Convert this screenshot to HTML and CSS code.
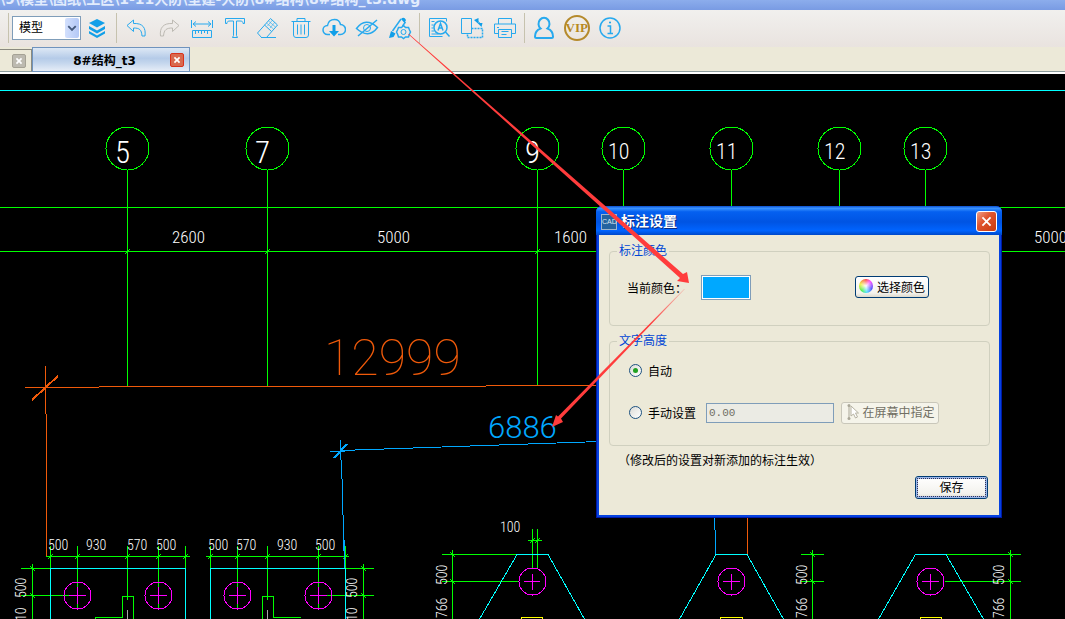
FILE: index.html
```html
<!DOCTYPE html>
<html lang="zh-CN">

<head>
    <meta charset="UTF-8">
    <meta name="viewport" content="width=device-width, initial-scale=1.0">
    <title>8#结构_t3</title>
    <link rel="stylesheet" href="styles.css">
</head>

<body>
    <header class="titlebar"><span>\9\模型\图纸\工区\1-11人防\型建-人防\8#结构\8#结构_t3.dwg</span></header>

    <nav class="toolbar">
        <span class="sep"></span>
        <div class="space">
            <select aria-label="空间">
                <option>模型</option>
                <option>布局</option>
            </select>
            <svg class="chevron" viewBox="0 0 15 21"><path d="M3.500 8.500l4 4 4-4" /></svg>
        </div>
        <button class="tool" aria-label="图层">
            <svg viewBox="0 0 24 24"><path class="solid" d="M12 3l8 4-8 4.500-8-4.500zM4 10l8 4.500 8-4.500v3l-8 4.500-8-4.500zM4 15l8 4.500 8-4.500v2.500l-8 4.500-8-4.500z" /></svg>
        </button>
        <span class="sep"></span>
        <button class="tool" aria-label="撤销">
            <svg viewBox="0 0 24 24"><path d="M9.500 4L3 9.500l6.500 6v-3.500c6 0 8 1.500 8.500 8h3c1-8-2-13-11.500-12.500z" /></svg>
        </button>
        <button class="tool off" aria-label="重做">
            <svg viewBox="0 0 24 24"><path d="M15.500 4l6.500 5.500-6.500 6v-3.500c-6 0-8.500 1.500-9 8h-3c-1-8 2.500-13 12-12.500z" /></svg>
        </button>
        <button class="tool" aria-label="测量">
            <svg viewBox="0 0 24 24"><path d="M1.500 4v8M22.500 4v8M3 8h18M6 5.500L3 8l3 2.500M18 5.500L21 8l-3 2.500M2.500 14.500h19v7h-19zM5.500 15v3M8.500 15v2M11.500 15v3M14.500 15v2M17.500 15v3" /></svg>
        </button>
        <button class="tool" aria-label="文字">
            <svg viewBox="0 0 24 24"><path d="M2.500 2.500h19v5h-1.500c0-2-1-2.500-3-2.500h-3.500v14.500l1 2h-5l1-2v-14.500h-3.500c-2 0-3 .500-3 2.500h-1.500z" /></svg>
        </button>
        <button class="tool" aria-label="橡皮">
            <svg viewBox="0 0 24 24"><path d="M14.500 2.500l7 6.500-11 12.500h-5l-4-4.500zM8.500 9l7 6.500M5 21.500h15" /><path class="hatch" d="M10.500 7l7 6M12.500 5l7 6M14 12l5-6M11.500 10l5-6" /></svg>
        </button>
        <button class="tool" aria-label="删除">
            <svg viewBox="0 0 24 24"><path d="M2.500 5.500h19M8 5V2.500h8V5M4.500 6v13q0 2.500 2.500 2.500h10q2.500 0 2.500-2.500V6M8.500 8.500v10M12 8.500v10M15.500 8.500v10" /></svg>
        </button>
        <button class="tool" aria-label="云下载">
            <svg viewBox="0 0 24 24"><path class="bold" d="M8 18.500H5.500a4.500 4.500 0 0 1 0-9q1-6 7-6 5 0 6 5a5 5 0 0 1 0 10H16" /><path class="solid" d="M10.500 9h3v6h3.500L12 20.500 7 15h3.500z" /></svg>
        </button>
        <button class="tool" aria-label="隐藏标注">
            <svg viewBox="0 0 24 24"><path class="bold" d="M1.500 12.500q9-12 21-1-9 12-21 1zM3 20L22 4" /><circle cx="12" cy="12" r="3.500" /></svg>
        </button>
        <button class="tool" aria-label="标注设置">
            <svg viewBox="0 0 24 24"><path class="bold" d="M13 3L4.500 15M17.500 6l-3 4" /><path class="solid" d="M13 3q3-3 5 1l-1.500 3zM3 15l4.500 2.500-2 3.500-4.500 1z" /><path class="bold" d="M15.500 9.500l2 2h3l1 2.500 1 2-1 2-1 3h-3l-2 1.500-2-1.500h-3l-1-3-1-2 1-2 1-2.500h3z" /><circle cx="15.500" cy="16" r="2.500" /></svg>
        </button>
        <span class="sep"></span>
        <button class="tool" aria-label="查找">
            <svg viewBox="0 0 24 24"><path d="M15.500 20.500h-13v-18h17v3M4.500 5.500h3M4.500 9h2M4.500 12h2M4.500 15h3M4.500 18h7" /><circle class="bold" cx="13.500" cy="11.500" r="6.500" /><path class="bold" d="M18.500 16l4 4.500M11 14.500l2.500-7 2.500 7M12 12h3" /></svg>
        </button>
        <button class="tool" aria-label="旋转">
            <svg viewBox="0 0 24 24"><path d="M1.500 2.500h10v15h-10zM17 5q3 1 4 4" /><path class="solid" d="M14 4l4.500-2v6zM17.500 7h5l-1 4z" /><path class="dash" d="M11.500 12.500h11v9h-15v-4" /></svg>
        </button>
        <button class="tool" aria-label="打印">
            <svg viewBox="0 0 24 24"><path d="M5.500 8V2.500h13V8M5.500 17.500h-4v-9.500h21v9.500h-4M4 11.500h2M8.500 15.500h7M8.500 18.500h5" /><path d="M5.500 13.500h13v8h-13z" /></svg>
        </button>
        <span class="sep"></span>
        <button class="tool" aria-label="用户">
            <svg viewBox="0 0 24 24"><path class="heavy" d="M8.500 12.500a5.500 6 0 1 1 7 0c4 1.500 5.500 4 5.500 8q0 1.500-1.500 1.500h-15Q3 22 3 20.500c0-4 1.500-6.500 5.500-8z" /></svg>
        </button>
        <button class="tool vip" aria-label="会员"><span>VIP</span></button>
        <button class="tool" aria-label="信息">
            <svg viewBox="0 0 24 24"><circle class="bold" cx="12" cy="12" r="10" /><path class="bold" d="M9.500 10h3v7.500M9.500 17.500h5.500" /><circle class="solid" cx="12" cy="6.500" r="1" /></svg>
        </button>
    </nav>

    <div class="tabs">
        <div class="tab back">
            <button class="tab-close" aria-label="关闭"><svg viewBox="0 0 14 14"><path d="M4 4l6 6M10 4l-6 6" /></svg></button>
        </div>
        <div class="tab active">
            <span>8#结构_t3</span>
            <button class="tab-close" aria-label="关闭"><svg viewBox="0 0 14 14"><path d="M4 4l6 6M10 4l-6 6" /></svg></button>
        </div>
    </div>

    <main class="canvas">
        <svg class="drawing" width="100%" height="100%">
            <!-- drawing units are window pixels, the canvas starts at 74 -->
            <g transform="translate(0 -74)">
                <path class="cyan" d="M0 90.500H4000" />

                <!-- axes -->
                <g class="green">
                    <path d="M0 207.500H4000M0 251.500H4000" />
                    <path d="M127.500 170V386M267.500 170V386M537.500 170V385M623.500 170V300M731.500 170V300M839.500 170V300M925.500 170V300" />
                    <path d="M125 254l5-5M265 254l5-5M535 254l5-5" />
                    <circle cx="127.500" cy="148.500" r="21.500" />
                    <circle cx="267.500" cy="148.500" r="21.500" />
                    <circle cx="537.500" cy="148.500" r="21.500" />
                    <circle cx="623.500" cy="148.500" r="21.500" />
                    <circle cx="731.500" cy="148.500" r="21.500" />
                    <circle cx="839.500" cy="148.500" r="21.500" />
                    <circle cx="925.500" cy="148.500" r="21.500" />
                </g>
                <g class="axis">
                    <text x="115" y="163">5</text>
                    <text x="255" y="163">7</text>
                    <text x="525" y="163">9</text>
                </g>
                <g class="axis two">
                    <text x="608" y="159">10</text>
                    <text x="716" y="159">11</text>
                    <text x="824" y="159">12</text>
                    <text x="910" y="159">13</text>
                </g>
                <g class="span">
                    <text x="172" y="243">2600</text>
                    <text x="377" y="243">5000</text>
                    <text x="554" y="243">1600</text>
                    <text x="1034" y="243">5000</text>
                </g>

                <!-- 12999 -->
                <g class="orange">
                    <path d="M45.500 366V414M46.500 414V556M25 387.500H99M99 386.500H486M486 385.500H600M747.500 500V555" />
                    <path class="tick" d="M32 400L58 376" />
                </g>
                <text class="measure orange-text" x="324" y="375">12999</text>

                <!-- 6886 -->
                <g class="blue">
                    <path d="M340.500 440V460M330 451.500H345M341 450.500L600 441.500M341.500 460L344.500 568M714.500 500V530M715.500 530V555" />
                    <path class="tick" d="M334 458L347 444" />
                </g>
                <text class="measure small blue-text" x="488" y="438">6886</text>

                <!-- left pile caps -->
                <g class="green">
                    <path d="M46 556.500H190M206 556.500H349" />
                    <path d="M50.500 546V568M77.500 546V610M127.500 546V600M158.500 546V610M185.500 546V568" />
                    <path d="M210.500 546V568M237.500 546V610M267.500 546V600M318.500 546V610M345.500 546V568" />
                    <path d="M48 559l5-5M75 559l5-5M125 559l5-5M156 559l5-5M183 559l5-5M208 559l5-5M235 559l5-5M265 559l5-5M316 559l5-5M343 559l5-5" />
                    <path d="M21 568.500H50M32.500 564V2000M21 595.500H70M345 568.500H374M363.500 564V2000M326 595.500H374" />
                    <path d="M30 566l5 5M30 593l5 5M361 566l5 5M361 593l5 5" />
                    <path d="M122.500 617V596.500H133.500V2000M122.500 617.500H95.500V2000M262.500 2000V596.500H273.500V617.500H300.500" />
                </g>
                <path class="grey" d="M127.500 610V2000M267.500 610V2000" />
                <path class="cyan" d="M50.500 2000V568.500H185.500V2000M210.500 2000V568.500H345.500V2000" />
                <path class="blue" d="M344.500 540V568" />
                <g class="magenta">
                    <circle cx="77.500" cy="595.500" r="13.500" />
                    <circle cx="158.500" cy="595.500" r="13.500" />
                    <circle cx="237.500" cy="595.500" r="13.500" />
                    <circle cx="318.500" cy="595.500" r="13.500" />
                    <path d="M69 595.500H86M77.500 587V604M150 595.500H167M158.500 587V604M229 595.500H246M237.500 587V604M310 595.500H327M318.500 587V604" />
                </g>
                <g class="dim">
                    <text x="48" y="550">500</text>
                    <text x="86" y="550">930</text>
                    <text x="127" y="550">570</text>
                    <text x="156" y="550">500</text>
                    <text x="208" y="550">500</text>
                    <text x="236" y="550">570</text>
                    <text x="277" y="550">930</text>
                    <text x="315" y="550">500</text>
                    <text x="500" y="532">100</text>
                </g>

                <!-- right pile caps -->
                <g class="green">
                    <path d="M442 554.500H517M442 581.500H519M452.500 550V2000M528 540.500H542M532.500 529V568M537.500 529V568" />
                    <path d="M801 554.500H824M801 581.500H824M812.500 550V2000M946 554.500H1021M945 581.500H1021M1010.500 550V2000" />
                    <path d="M450 552l5 5M450 579l5 5M810 552l5 5M810 579l5 5M1008 552l5 5M1008 579l5 5M530 543l5-5M535 543l5-5" />
                </g>
                <path class="cyan" d="M479 620L517 554.500H548L585 620M679 620L716 554.500H747L784 620M878 620L915.500 554.500H946L984 620" />
                <g class="magenta">
                    <circle cx="532.500" cy="581.500" r="13.500" />
                    <circle cx="731.500" cy="581.500" r="13.500" />
                    <circle cx="930.500" cy="581.500" r="13.500" />
                    <path d="M524 581.500H540M532.500 574V590M723 581.500H740M731.500 574V590M922 581.500H939M930.500 574V590" />
                </g>
                <path class="yellow" d="M521.500 2000V617.500H542.500V2000M720.500 2000V617.500H742.500V2000M920.500 2000V617.500H941.500V2000" />
                <g class="dim">
                    <text transform="translate(26 598) rotate(-90)">500</text>
                    <text transform="translate(26 621) rotate(-90)">10</text>
                    <text transform="translate(357 598) rotate(-90)">500</text>
                    <text transform="translate(357 621) rotate(-90)">10</text>
                    <text transform="translate(447 585) rotate(-90)">500</text>
                    <text transform="translate(447 618) rotate(-90)">766</text>
                    <text transform="translate(807 585) rotate(-90)">500</text>
                    <text transform="translate(807 618) rotate(-90)">766</text>
                    <text transform="translate(1004 585) rotate(-90)">500</text>
                    <text transform="translate(1004 618) rotate(-90)">766</text>
                </g>
            </g>
        </svg>

        <form class="dialog" role="dialog" aria-labelledby="dialog-title">
            <div class="dialog-head">
                <span class="app-icon">CAD</span>
                <h1 id="dialog-title">标注设置</h1>
                <button type="button" class="close" aria-label="关闭"><svg viewBox="0 0 21 21"><path d="M5 5l9 9M14 5l-9 9" /></svg></button>
            </div>
            <div class="dialog-body">
                <fieldset class="color-group">
                    <legend>标注颜色</legend>
                    <div class="row">
                        <label for="color">当前颜色：</label>
                        <input type="color" id="color" class="swatch" value="#00a8ff">
                        <button type="button" class="btn pick">
                            <span class="wheel"></span>选择颜色
                        </button>
                    </div>
                </fieldset>
                <fieldset class="height-group">
                    <legend>文字高度</legend>
                    <div class="row">
                        <input type="radio" name="height" id="auto" checked>
                        <label for="auto">自动</label>
                    </div>
                    <div class="row">
                        <input type="radio" name="height" id="manual">
                        <label for="manual">手动设置</label>
                        <input type="text" class="value" value="0.00" aria-label="高度" disabled>
                        <button type="button" class="btn screen" disabled>
                            <svg viewBox="0 0 14 18"><path class="bar" d="M3 3v12" /><circle cx="3" cy="2.500" r="1.500" /><circle cx="3" cy="15.500" r="1.500" /><path class="arrow" d="M5 3v10l2.500-2 2 4 2-1-2-4h3z" /></svg>在屏幕中指定
                        </button>
                    </div>
                </fieldset>
                <p class="note">（修改后的设置对新添加的标注生效）</p>
                <div class="actions"><button type="submit" class="btn save">保存</button></div>
            </div>
        </form>
    </main>

    <!-- guide arrows: tool -> dialog -> drawing -->
    <svg class="arrows" width="100%" height="100%">
        <defs>
            <linearGradient id="fade" gradientUnits="userSpaceOnUse" x1="685" y1="289" x2="650" y2="325">
                <stop offset="0" stop-color="#ff3c3c" stop-opacity="0.2" />
                <stop offset="1" stop-color="#ff3c3c" />
            </linearGradient>
        </defs>
        <path fill="#ff3c3c" d="M408 34L409 34 683 274 687 272 689 283 677 281 680 278z" />
        <path fill="url(#fade)" d="M685 289L561 418.500 563 422 552 427 556 415 558 416.500 684 289z" />
    </svg>
</body>

</html>
```
FILE: styles.css
```css
* {
    box-sizing: border-box;
}

body,
html {
    height: 100%;
    margin: 0;
}

body {
    position: relative;
    display: flex;
    flex-direction: column;
    overflow: hidden;
    background-color: #ece9d8;
    font-family: "Liberation Sans", "Noto Sans CJK SC", sans-serif;
    font-size: 12px;
    color: #000;
}

button,
input,
select {
    margin: 0;
    font: inherit;
    color: inherit;
}

button {
    padding: 0;
    border: 0;
    background: none;
}

/* title bar and toolbar */
.titlebar {
    display: flex;
    align-items: flex-end;
    flex: none;
    height: 10px;
    padding-bottom: 4px;
    overflow: hidden;
    background: linear-gradient(#8cadec, #799be3);
    color: #e2ecfd;
    font-family: "DejaVu Sans", "Noto Sans CJK SC", sans-serif;
    font-size: 14px;
    font-weight: 700;
    line-height: 14px;
    white-space: nowrap;
}

.toolbar {
    display: flex;
    align-items: center;
    flex: none;
    height: 37px;
    padding: 0 0 1px 5px;
    background: linear-gradient(#f1f0ee, #e9e3df);
}

.sep {
    width: 1px;
    height: 30px;
    margin: 0 2px 0 3px;
    background: #c6c2ae;
}

.space {
    position: relative;
    margin-left: 1px;
}

.space select {
    display: block;
    width: 69px;
    height: 24px;
    padding: 0 6px;
    appearance: none;
    border: 1px solid #7f9db9;
    border-radius: 0;
    background: #fff;
}

.chevron {
    position: absolute;
    top: 2px;
    right: 2px;
    width: 14px;
    height: 20px;
    border-radius: 2px;
    background: linear-gradient(90deg, #d3e0fd, #b3c8f6);
    fill: none;
    stroke: #44597c;
    stroke-width: 2;
    pointer-events: none;
}

.tool {
    display: grid;
    place-items: center;
    width: 33px;
    height: 36px;
}

.space + .tool {
    width: 32px;
}

.tool svg {
    width: 24px;
    height: 24px;
    fill: none;
    stroke: #27a9ee;
    stroke-width: 1;
}

.tool .bold {
    stroke-width: 1.5;
}

.tool .heavy {
    stroke-width: 2;
}

.tool .hatch {
    stroke-width: 0.6;
}

.tool .dash {
    stroke-width: 1.5;
    stroke-dasharray: 2 1;
}

.tool .solid {
    fill: #119fe8;
    stroke: none;
}

.tool.off svg {
    stroke: #bdbab3;
}

.vip span {
    display: grid;
    place-items: center;
    width: 26px;
    height: 26px;
    border: 2px solid #b58a2c;
    border-radius: 50%;
    color: #b8891f;
    font: 700 13px "Liberation Serif", serif;
}

/* document tabs */
.tabs {
    display: flex;
    align-items: flex-end;
    flex: none;
    height: 27px;
    border-bottom: 2px solid #fff;
    box-shadow: inset 0 -1px #8c9c9c;
}

.tab {
    display: flex;
    align-items: center;
    justify-content: flex-end;
    border: 1px solid #8a8a80;
    border-bottom-color: #8c9c9c;
}

.tab.back {
    width: 32px;
    height: 23px;
    padding-right: 5px;
    border-left: 0;
}

.tab.active {
    width: 158px;
    height: 25px;
    padding-right: 5px;
    border-color: #6f93bd;
    background: linear-gradient(#dde8f5, #b5cbe8 45%, #c4d6ed 65%, #e6edf7);
    font-family: "DejaVu Sans", "Noto Sans CJK SC", sans-serif;
    font-weight: 700;
}

.tab.active span {
    flex: 1;
    padding-left: 6px;
    text-align: center;
}

.tab-close {
    display: grid;
    width: 14px;
    height: 14px;
    border: 1px solid #a5a295;
    border-radius: 2px;
    background: #bdbab0;
}

.active .tab-close {
    border-color: #d8321c;
    background: #d9694f;
}

.tab-close svg {
    fill: none;
    stroke: #fff;
    stroke-width: 2;
}

/* drawing */
.canvas {
    position: relative;
    flex: 1;
    min-height: 0;
    overflow: hidden;
    background: #000;
}

.drawing {
    display: block;
    fill: none;
    stroke-width: 1;
}

.drawing path,
.drawing circle {
    shape-rendering: crispEdges;
}

.drawing .tick {
    stroke-width: 2;
}

.green {
    stroke: #0f0;
}

.cyan {
    stroke: #0ff;
}

.magenta {
    stroke: #f0f;
}

.yellow {
    stroke: #ff0;
}

.grey {
    stroke: #aaa;
}

.orange {
    stroke: #f05a0a;
}

.blue {
    stroke: #00a8ff;
}

.drawing text {
    fill: #fff;
    stroke: none;
}

.axis {
    font: 300 31px "Roboto Condensed", "Liberation Sans Narrow", sans-serif;
}

.axis.two {
    font-size: 22px;
}

.span {
    font: 300 17px "Roboto Condensed", "Liberation Sans Narrow", sans-serif;
}

.dim {
    font: 300 14px "Roboto Condensed", "Liberation Sans Narrow", sans-serif;
}

.measure {
    font: 100 50px Roboto, sans-serif;
}

.measure.small {
    font-size: 31px;
    font-weight: 300;
}

.drawing .orange-text {
    fill: #f05a0a;
}

.drawing .blue-text {
    fill: #00a8ff;
}

/* dialog */
.dialog {
    position: absolute;
    top: 132px;
    left: 596px;
    width: 406px;
    padding: 0 3px 3px;
    border-radius: 6px 6px 0 0;
    background: #0542e0;
    box-shadow: inset 1px 0 #0019a5, inset -1px 0 #0019a5, inset 0 -1px #0019a5;
}

.dialog-head {
    display: flex;
    align-items: center;
    height: 29px;
    margin: 0 -3px;
    padding: 2px 5px 0;
    border-radius: 6px 6px 0 0;
    background: linear-gradient(#0a4fd0, #3a93ff 8%, #0560f0 20%, #0054e3 55%, #0064ff 85%, #0048c8);
}

.app-icon {
    width: 16px;
    height: 16px;
    border: 1px solid #9db4cc;
    background: #24639f;
    color: #dbe6ef;
    font-size: 7px;
    line-height: 14px;
    text-align: center;
}

.dialog-head h1 {
    flex: 1;
    margin: 0 0 2px 4px;
    color: #fff;
    font-size: 14px;
    line-height: 20px;
    text-shadow: 1px 1px #0a2a80;
}

.close {
    display: grid;
    width: 21px;
    height: 21px;
    border: 1px solid #fff;
    border-radius: 3px;
    background: linear-gradient(135deg, #f0a088, #e0552f 40%, #c83a10);
}

.close svg {
    width: 19px;
    height: 19px;
    fill: none;
    stroke: #fff;
    stroke-width: 2;
}

.close path {
    transform: translate(1px, 1px);
}

.dialog-body {
    padding: 8px 9px 16px 10px;
    background: #ece9d8;
}

fieldset {
    min-width: 0;
    margin: 0 0 7px;
    padding: 0 17px;
    border: 1px solid #d0d0bf;
    border-radius: 4px;
}

legend {
    margin-left: -10px;
    padding: 0 2px;
    color: #0046d5;
    line-height: 16px;
}

.row {
    display: flex;
    align-items: center;
}

.color-group {
    height: 83px;
}

.color-group .row {
    height: 56px;
}

.height-group {
    height: 113px;
}

.height-group .row {
    height: 41px;
}

.height-group legend + .row {
    height: 43px;
}

.swatch {
    width: 50px;
    height: 25px;
    margin: 0 0 0 14px;
    padding: 1px;
    appearance: none;
    border: 1px solid #7f9db9;
    background: #fff;
}

.swatch::-webkit-color-swatch-wrapper {
    padding: 0;
}

.swatch::-webkit-color-swatch {
    border: 0;
}

.btn {
    display: flex;
    align-items: center;
    justify-content: center;
    gap: 4px;
    height: 22px;
    padding-bottom: 2px;
    border: 1px solid #003c74;
    border-radius: 3px;
    background: linear-gradient(#fff, #f3f2ed 80%, #dcd8cc);
    white-space: nowrap;
}

.pick {
    width: 74px;
    margin: 0 43px 0 auto;
}

.wheel {
    width: 14px;
    height: 14px;
    border-radius: 50%;
    background: radial-gradient(#fff, transparent 70%), conic-gradient(#f44, #f4f 12%, #44f 32%, #4df 48%, #4e4 62%, #ee3 80%, #f44);
}

input[type="radio"] {
    display: grid;
    place-items: center;
    width: 13px;
    height: 13px;
    margin: 0 6px 0 2px;
    appearance: none;
    border: 1px solid #1c5180;
    border-radius: 50%;
    background: linear-gradient(135deg, #dcdcd7, #fff);
}

input[type="radio"]:checked::before {
    content: "";
    width: 5px;
    height: 5px;
    border-radius: 50%;
    background: #21a121;
}

.value {
    width: 128px;
    height: 20px;
    margin: 0 7px 0 10px;
    padding: 0 2px;
    border: 1px solid #7f9db9;
    border-radius: 0;
    background: #ebebe4;
    color: #716f64;
    font-family: "Liberation Mono", monospace;
    font-size: 11px;
}

.screen {
    gap: 3px;
    width: 98px;
    border-color: #c9c7ba;
    background: #f5f4ea;
    color: #716f64;
}

.screen svg {
    width: 14px;
    height: 18px;
    fill: #aaa798;
}

.screen .bar {
    stroke: #aaa798;
}

.screen .arrow {
    fill: #fff;
    stroke: #b5b2a2;
}

.note {
    margin: 0 0 7px 9px;
    line-height: 16px;
}

.actions {
    display: flex;
    justify-content: flex-end;
    padding-right: 2px;
}

.save {
    width: 73px;
    height: 23px;
    outline: 1px dotted #335;
    outline-offset: -3px;
    box-shadow: inset 0 0 0 2px #9db8ea;
}

.arrows {
    position: absolute;
    top: 0;
    left: 0;
    pointer-events: none;
}
```
